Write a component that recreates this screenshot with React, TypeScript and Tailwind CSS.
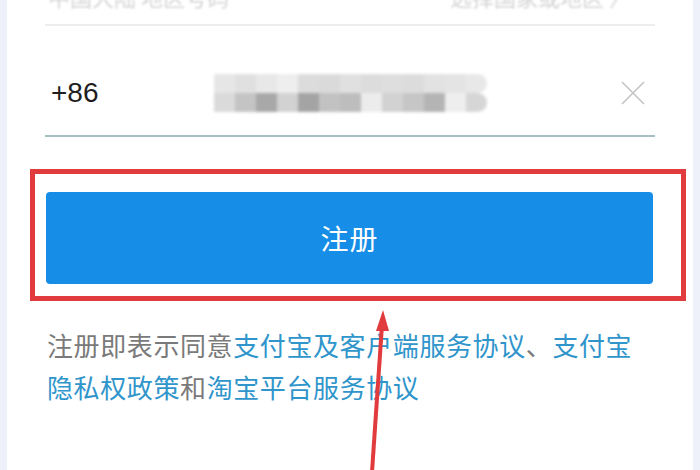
import React from "react";

const pixels: string[][] = [
  ["#e6e6e6", "#e0e0e0", "#e8e8e8", "#eeeeee", "#dcdcdc", "#dadada", "#e0e0e0", "#dcdcdc", "#dedede", "#dcdcdc", "#e2e2e2", "#e4e4e4", "#e8e8e8"],
  ["#dadada", "#c4c4c4", "#a8a8a8", "#d2d2d2", "#a4a4a4", "#c2c2c2", "#bdbdbd", "#ececec", "#d2d2d2", "#c6c6c6", "#b4b4b4", "#eeeeee", "#d6d6d6"],
];

export default function App() {
  return (
    <div
      className="w-[700px] h-[470px] bg-[#eef0fa] flex px-[7px] overflow-hidden"
      style={{ fontFamily: '"Noto Sans CJK SC", "Noto Sans", sans-serif' }}
    >
      <div className="relative flex-1 bg-white flex flex-col">
        {/* cut-off top row */}
        <div className="flex justify-between h-[24px] -mt-[16px] pl-[41px] pr-[62px] text-[22px] leading-[24px] text-[#d4d4d4] blur-[1px]">
          <span>中国大陆 地区号码</span>
          <span>选择国家或地区 〉</span>
        </div>
        <div className="mt-[16px] mx-[38px] h-[2px] bg-[#ededed]" />

        {/* phone row */}
        <div className="flex items-center h-[109px] pt-[24px] mx-[38px]">
          <span
            className="ml-[6px] text-[28px] leading-none text-[#1e1e1e]"
            style={{ fontFamily: '"Liberation Sans", Arial, sans-serif' }}
          >
            +86
          </span>
          <div className="ml-[115px] flex flex-col blur-[1.5px]">
            {pixels.map((row, i) => (
              <div key={i} className="flex">
                {row.map((c, j) => (
                  <div
                    key={j}
                    className={j === row.length - 1 ? "w-[21px] h-[19px] rounded-r-[10px]" : "w-[21px] h-[19px]"}
                    style={{ backgroundColor: c }}
                  />
                ))}
              </div>
            ))}
          </div>
          <div className="flex-1" />
          <svg width="24" height="24" viewBox="0 0 24 24" className="mr-[10px]">
            <path d="M1 1 L23 23 M23 1 L1 23" stroke="#c4c4c4" strokeWidth="1.6" fill="none" />
          </svg>
        </div>
        <div className="mx-[38px] h-[2px] bg-[#a6c0c6]" />

        {/* red annotation box with button */}
        <div className="mt-[32px] ml-[23px] w-[656px] border-[5px] border-[#e23b3d] pt-[18px] pb-[12px] pl-[11px] pr-[28px]">
          <div className="h-[92px] rounded-[4px] bg-[#168de6] flex items-center justify-center text-white text-[28px] tracking-[1px]">
            注册
          </div>
        </div>

        {/* agreement text */}
        <p className="mt-[23px] ml-[40px] text-[26px] leading-[42px] tracking-[0.6px] text-[#7a7a7a]">
          注册即表示同意<span className="text-[#2f95cb]">支付宝及客户端服务协议</span>、
          <span className="text-[#2f95cb]">支付宝</span>
          <br />
          <span className="text-[#2f95cb]">隐私权政策</span>和<span className="text-[#2f95cb]">淘宝平台服务协议</span>
        </p>

        {/* red arrow annotation */}
        <svg className="absolute left-0 top-0 pointer-events-none" width="686" height="470">
          <line x1="365" y1="472" x2="375" y2="325" stroke="#e23b3d" strokeWidth="4" />
          <polygon points="376,310 369,331 382,331" fill="#e23b3d" />
        </svg>
      </div>
    </div>
  );
}
